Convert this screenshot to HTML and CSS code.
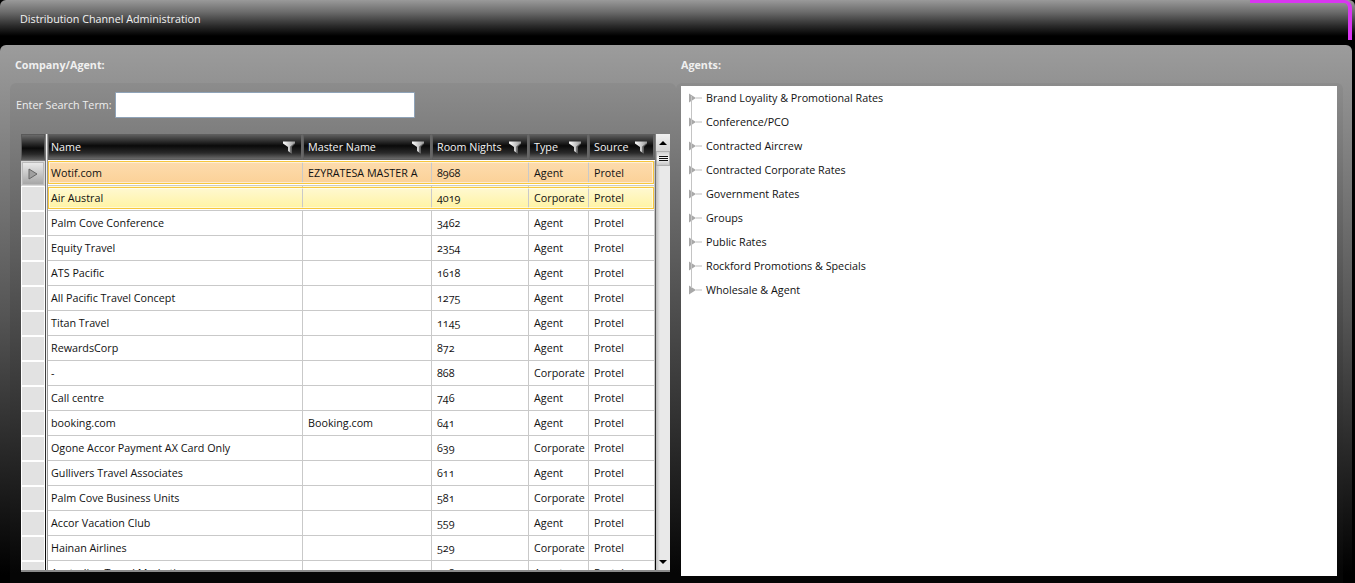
FILE: index.html
```html
<!DOCTYPE html>
<html lang="en">
<head>
<meta charset="utf-8">
<title>Distribution Channel Administration</title>
<link rel="stylesheet" href="styles.css">
</head>
<body>
<svg width="0" height="0" class="defs"><defs>
<linearGradient id="steel" x1="0" x2="1" y1="0" y2="0"><stop offset="0" stop-color="#fff"/><stop offset="1" stop-color="#9a9a9a"/></linearGradient>
<symbol id="funnel" viewBox="0 0 12 13"><path d="M0 0.5H12V2.5L8.5 6V12.5L5 10V6L0 2.5Z" fill="url(#steel)"/><path d="M8.5 6V12.5L7.3 11.7V5.4L11 2.5H12Z" fill="#555"/></symbol>
<symbol id="tw" viewBox="0 0 17 14"><path d="M0 2.5V11.5L7 7Z" fill="#a8a8a8"/><path d="M7 7H13" stroke="#bdbdbd" fill="none"/></symbol>
</defs></svg>
<header class="topbar">
  <div class="title">Distribution Channel Administration</div>
  <div class="accent"></div>
</header>
<main class="panel">
  <section class="left">
    <h2 class="heading">Company/Agent:</h2>
    <div class="card">
      <div class="search">
        <label class="search-label" for="term">Enter Search Term:</label>
        <input id="term" class="search-input" type="text">
      </div>
      <div class="grid-wrap">
        <div class="grid">
          <div class="row head">
            <div class="rh"></div>
            <div class="hc first">Name<svg class="fn"><use href="#funnel"/></svg></div>
            <div class="hc">Master Name<svg class="fn"><use href="#funnel"/></svg></div>
            <div class="hc">Room Nights<svg class="fn"><use href="#funnel"/></svg></div>
            <div class="hc">Type<svg class="fn"><use href="#funnel"/></svg></div>
            <div class="hc">Source<svg class="fn"><use href="#funnel"/></svg></div>
          </div>
          <div class="row current"><div class="rh"><svg class="arrow" viewBox="0 0 10 12"><path d="M1 1V11L9 6Z" fill="#a0a0a0" stroke="#666"/></svg></div><div class="c">Wotif.com</div><div class="c">EZYRATESA MASTER A</div><div class="c">8968</div><div class="c">Agent</div><div class="c">Protel</div></div>
          <div class="row hover"><div class="rh"></div><div class="c">Air Austral</div><div class="c"></div><div class="c">4019</div><div class="c">Corporate</div><div class="c">Protel</div></div>
          <div class="row"><div class="rh"></div><div class="c">Palm Cove Conference</div><div class="c"></div><div class="c">3462</div><div class="c">Agent</div><div class="c">Protel</div></div>
          <div class="row"><div class="rh"></div><div class="c">Equity Travel</div><div class="c"></div><div class="c">2354</div><div class="c">Agent</div><div class="c">Protel</div></div>
          <div class="row"><div class="rh"></div><div class="c">ATS Pacific</div><div class="c"></div><div class="c">1618</div><div class="c">Agent</div><div class="c">Protel</div></div>
          <div class="row"><div class="rh"></div><div class="c">All Pacific Travel Concept</div><div class="c"></div><div class="c">1275</div><div class="c">Agent</div><div class="c">Protel</div></div>
          <div class="row"><div class="rh"></div><div class="c">Titan Travel</div><div class="c"></div><div class="c">1145</div><div class="c">Agent</div><div class="c">Protel</div></div>
          <div class="row"><div class="rh"></div><div class="c">RewardsCorp</div><div class="c"></div><div class="c">872</div><div class="c">Agent</div><div class="c">Protel</div></div>
          <div class="row"><div class="rh"></div><div class="c">-</div><div class="c"></div><div class="c">868</div><div class="c">Corporate</div><div class="c">Protel</div></div>
          <div class="row"><div class="rh"></div><div class="c">Call centre</div><div class="c"></div><div class="c">746</div><div class="c">Agent</div><div class="c">Protel</div></div>
          <div class="row"><div class="rh"></div><div class="c">booking.com</div><div class="c">Booking.com</div><div class="c">641</div><div class="c">Agent</div><div class="c">Protel</div></div>
          <div class="row"><div class="rh"></div><div class="c">Ogone Accor Payment AX Card Only</div><div class="c"></div><div class="c">639</div><div class="c">Corporate</div><div class="c">Protel</div></div>
          <div class="row"><div class="rh"></div><div class="c">Gullivers Travel Associates</div><div class="c"></div><div class="c">611</div><div class="c">Agent</div><div class="c">Protel</div></div>
          <div class="row"><div class="rh"></div><div class="c">Palm Cove Business Units</div><div class="c"></div><div class="c">581</div><div class="c">Corporate</div><div class="c">Protel</div></div>
          <div class="row"><div class="rh"></div><div class="c">Accor Vacation Club</div><div class="c"></div><div class="c">559</div><div class="c">Agent</div><div class="c">Protel</div></div>
          <div class="row"><div class="rh"></div><div class="c">Hainan Airlines</div><div class="c"></div><div class="c">529</div><div class="c">Corporate</div><div class="c">Protel</div></div>
          <div class="row"><div class="rh"></div><div class="c">Australian Travel Marketing</div><div class="c"></div><div class="c">528</div><div class="c">Agent</div><div class="c">Protel</div></div>
        </div>
        <div class="scrollbar">
          <div class="sb-btn"><span class="up"></span></div>
          <div class="thumb"><span></span><span></span><span></span></div>
          <div class="track"></div>
          <div class="sb-btn bottom"><span class="down"></span></div>
        </div>
      </div>
    </div>
  </section>
  <section class="right">
    <h2 class="heading">Agents:</h2>
    <div class="card tree-card">
      <ul class="tree">
        <li><svg class="tw"><use href="#tw"/></svg>Brand Loyality &amp; Promotional Rates</li>
        <li><svg class="tw"><use href="#tw"/></svg>Conference/PCO</li>
        <li><svg class="tw"><use href="#tw"/></svg>Contracted Aircrew</li>
        <li><svg class="tw"><use href="#tw"/></svg>Contracted Corporate Rates</li>
        <li><svg class="tw"><use href="#tw"/></svg>Government Rates</li>
        <li><svg class="tw"><use href="#tw"/></svg>Groups</li>
        <li><svg class="tw"><use href="#tw"/></svg>Public Rates</li>
        <li><svg class="tw"><use href="#tw"/></svg>Rockford Promotions &amp; Specials</li>
        <li><svg class="tw"><use href="#tw"/></svg>Wholesale &amp; Agent</li>
      </ul>
    </div>
  </section>
</main>
</body>
</html>
```
FILE: styles.css
```css
* { box-sizing: border-box; }
html, body { margin: 0; height: 583px; overflow: hidden; background: #000; }
body { font-family: "Open Sans", "Liberation Sans", sans-serif; font-size: 10.75px; font-variant-numeric: oldstyle-nums; color: #111; display: flex; flex-direction: column; }
.defs { position: absolute; }

.topbar { height: 45px; flex: none; position: relative; padding: 12px 20px 0; color: #f2f2f2; line-height: 15px; border-radius: 6px 6px 0 0;
  background: linear-gradient(#9a9a9a 0, #6c6c6c 12px, #2a2a2a 26px, #000 36px); }
.accent { position: absolute; top: 0; left: 1250px; width: 102px; height: 40px; border: solid #d936f0; border-width: 3px 4px 0 0; border-top-right-radius: 8px; }

.panel { flex: none; width: 1352px; height: 538px; display: flex; border-radius: 6px 6px 0 0; background: linear-gradient(#9c9c9c 0, #8a8a8a 70px, #555 270px, #000 530px); padding: 0 9px 0 10px; }
.heading { margin: 0; height: 38px; padding: 13px 5px 0; font-size: 10.75px; line-height: 15px; font-weight: 700; color: #f0f0f0; }
.left { width: 666px; flex: none; }
.right { flex: 1; }

.card { height: 500px; border-radius: 6px 6px 0 0; background: linear-gradient(#8c8c8c 0, #6a6a6a 120px, #333 330px, #050505 490px); }
.left .card { padding-top: 9px; }

.search { display: flex; align-items: center; height: 26px; padding-left: 6px; color: #eee; }
.search-label { width: 99px; flex: none; line-height: 15px; }
.search-input { width: 300px; height: 26px; border: 1px solid #8fa3b8; border-radius: 1px; background: #fff; padding: 0; }

.grid-wrap { margin: 16px 0 0 11px; width: 649px; height: 438px; display: flex; gap: 1px; overflow: hidden; border-bottom: 2px solid #8a8a8a; }
.grid { width: 634px; flex: none; overflow: hidden; background: linear-gradient(90deg, transparent 25px, #f2f2f2 25px 26px, #9a9a9a 26px 27px, #fff 27px); }
.row { position: relative; display: grid; grid-template-columns: 27px 255px 129px 97px 60px 66px; height: 25px; }

.rh { background: #e2e2e2; border: 1px solid #fff; margin-right: 3px; display: flex; align-items: center; justify-content: center; }
.c { padding-left: 5px; line-height: 24px; white-space: nowrap; overflow: hidden; border-right: 1px solid #c9c9c9; border-bottom: 1px solid #c9c9c9; background: #fff; color: #111; }
.c:nth-child(2) { padding-left: 3px; }

.head { height: 27px; }
.head .rh { height: 26px; background: linear-gradient(#6a6a6a, #0a0a0a 55%, #2a2a2a 80%, #555); border: 1px solid #5a5a5a; }
.hc { position: relative; height: 26px; padding-left: 4px; line-height: 24px; color: #f4f4f4; background: linear-gradient(#5c5c5c 0, #0a0a0a 45%, #2a2a2a 75%, #6a6a6a 100%); border: 1px solid #5e5e5e; border-right: 2px solid #666; }
.hc.first { padding-left: 2px; }
.fn { position: absolute; right: 6px; top: 6px; width: 12px; height: 13px; }

.current .c { background: linear-gradient(#fddcae, #fbd096); }
.hover .c { background: linear-gradient(#fff9d5, #fff3a0); }
.current::after, .hover::after { content: ""; position: absolute; left: 27px; right: 1px; top: 0; bottom: 2px; border: 1px solid #f7c73c; box-shadow: inset 0 0 0 1px rgba(255,255,255,.55), 0 1px 0 #fff; pointer-events: none; }
.hover::after { top: 1px; }
.current .rh { background: linear-gradient(#ececec, #a4a4a4); border: 1px solid #d8d8d8; box-shadow: inset 0 0 0 1px #bbb; }
.arrow { width: 10px; height: 12px; }

.scrollbar { width: 14px; flex: none; display: flex; flex-direction: column; background: linear-gradient(90deg, #bdbdbd, #e9e9e9 4px); }
.sb-btn { height: 17px; flex: none; display: flex; align-items: center; justify-content: center; background: linear-gradient(#f0f0f0, #d6d6d6); }
.sb-btn.bottom { background: none; }
.up { border: solid transparent; border-width: 0 4px 4px; border-bottom-color: #000; }
.down { border: solid transparent; border-width: 4px 4px 0; border-top-color: #000; }
.thumb { height: 15px; flex: none; display: flex; flex-direction: column; gap: 1px; justify-content: center; align-items: center; background: linear-gradient(#d0d0d0, #fafafa 50%, #c4c4c4); border: 1px solid #b0b0b0; }
.thumb span { width: 9px; height: 1px; background: #111; }
.track { flex: 1; }

.tree-card { padding: 3px 5px 0; }
.tree { list-style: none; margin: 0; padding: 0 0 0 8px; height: 490px; width: 656px; background: #fff; color: #111; }
.tree li { height: 24px; line-height: 24px; display: flex; align-items: center; position: relative; }
.tw { width: 17px; height: 14px; flex: none; }
.tree li + li::before { content: ""; position: absolute; left: 2px; top: -14px; height: 24px; width: 1px; background: #c4c4c4; }
```
